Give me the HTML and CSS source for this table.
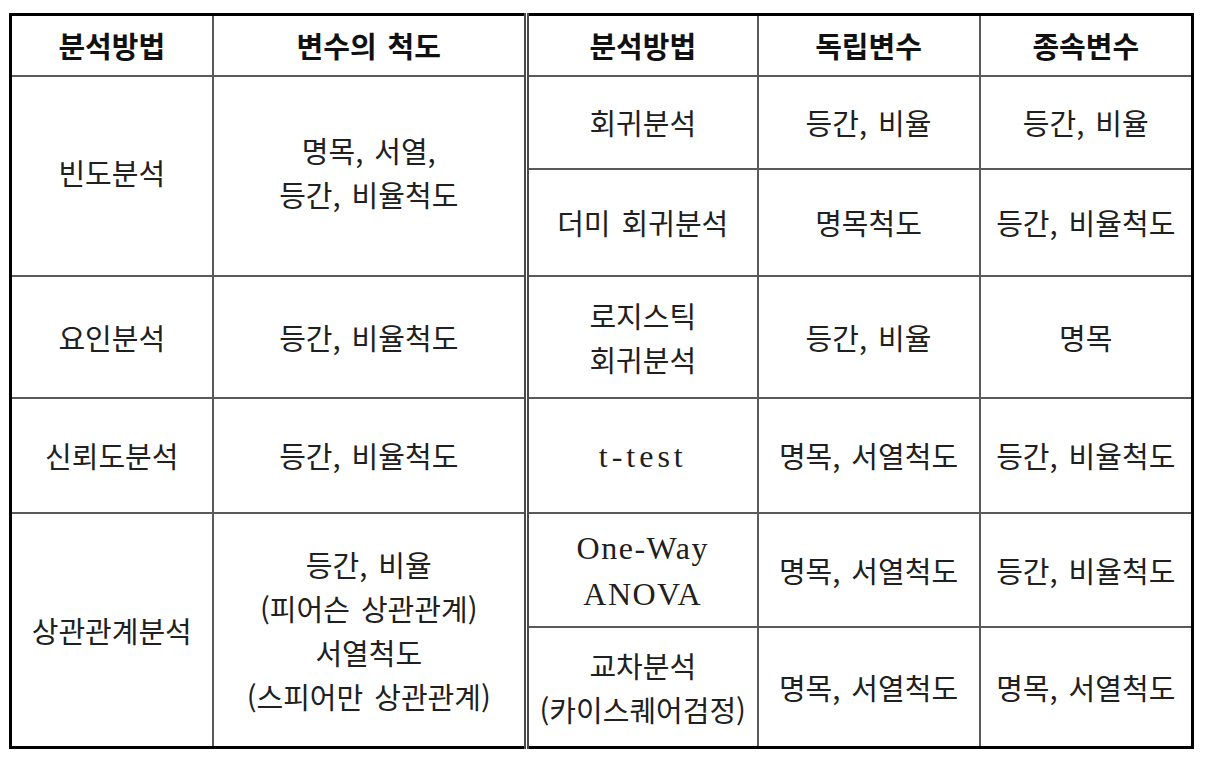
FILE: index.html
```html
<!DOCTYPE html>
<html lang="ko">
<head>
<meta charset="utf-8">
<title>분석방법과 변수의 척도</title>
<link rel="stylesheet" href="styles.css">
</head>
<body>
<table class="grid">
  <colgroup>
    <col class="c1">
    <col class="c2">
    <col class="c3">
    <col class="c4">
    <col class="c5">
  </colgroup>
  <thead>
    <tr class="r-head">
      <th>분석방법</th>
      <th class="split">변수의 척도</th>
      <th>분석방법</th>
      <th>독립변수</th>
      <th>종속변수</th>
    </tr>
  </thead>
  <tbody>
    <tr class="r1">
      <td rowspan="2" class="lift">빈도분석</td>
      <td rowspan="2" class="split lift">명목, 서열,<br>등간, 비율척도</td>
      <td>회귀분석</td>
      <td>등간, 비율</td>
      <td>등간, 비율</td>
    </tr>
    <tr class="r2">
      <td>더미 회귀분석</td>
      <td>명목척도</td>
      <td>등간, 비율척도</td>
    </tr>
    <tr class="r3">
      <td>요인분석</td>
      <td class="split">등간, 비율척도</td>
      <td>로지스틱<br>회귀분석</td>
      <td>등간, 비율</td>
      <td>명목</td>
    </tr>
    <tr class="r4">
      <td>신뢰도분석</td>
      <td class="split">등간, 비율척도</td>
      <td><span class="latin wide">t-test</span></td>
      <td>명목, 서열척도</td>
      <td>등간, 비율척도</td>
    </tr>
    <tr class="r5">
      <td rowspan="2">상관관계분석</td>
      <td rowspan="2" class="split">등간, 비율<br>(피어슨 상관관계)<br>서열척도<br>(스피어만 상관관계)</td>
      <td><span class="latin">One-Way<br>ANOVA</span></td>
      <td>명목, 서열척도</td>
      <td>등간, 비율척도</td>
    </tr>
    <tr class="r6">
      <td>교차분석<br>(카이스퀘어검정)</td>
      <td>명목, 서열척도</td>
      <td>명목, 서열척도</td>
    </tr>
  </tbody>
</table>
</body>
</html>
```

FILE: styles.css
```css
html, body {
  margin: 0;
  padding: 0;
  background: #ffffff;
}

body {
  padding: 13px 0 0 9px;
  font-family: "Noto Sans CJK KR", "Noto Sans", sans-serif;
  color: #202020;
}

.grid {
  border-collapse: collapse;
  table-layout: fixed;
  width: 1185px;
  border: 3px solid #000;
}

.c1 { width: 202px; }
.c2 { width: 314px; }
.c3 { width: 231px; }
.c4 { width: 222px; }
.c5 { width: 213px; }

.grid th,
.grid td {
  border: 2px solid #5a5a5a;
  padding: 0;
  text-align: center;
  vertical-align: middle;
  font-size: 29px;
  line-height: 44px;
  word-spacing: 0.1em;
  letter-spacing: 0;
  white-space: nowrap;
}

.grid th {
  font-weight: 700;
  color: #111;
}

.grid .split {
  border-right: 5px double #4a4a4a;
}

.grid .lift {
  padding-bottom: 8px;
}

.latin {
  font-family: "Liberation Serif", "Times New Roman", serif;
  font-size: 32px;
  letter-spacing: 1.5px;
  word-spacing: 0;
}

.latin.wide {
  letter-spacing: 4px;
}

.r-head { height: 61px; }
.r1 { height: 93px; }
.r2 { height: 107px; }
.r3 { height: 122px; }
.r4 { height: 115px; }
.r5 { height: 114px; }
.r6 { height: 121px; }
```
